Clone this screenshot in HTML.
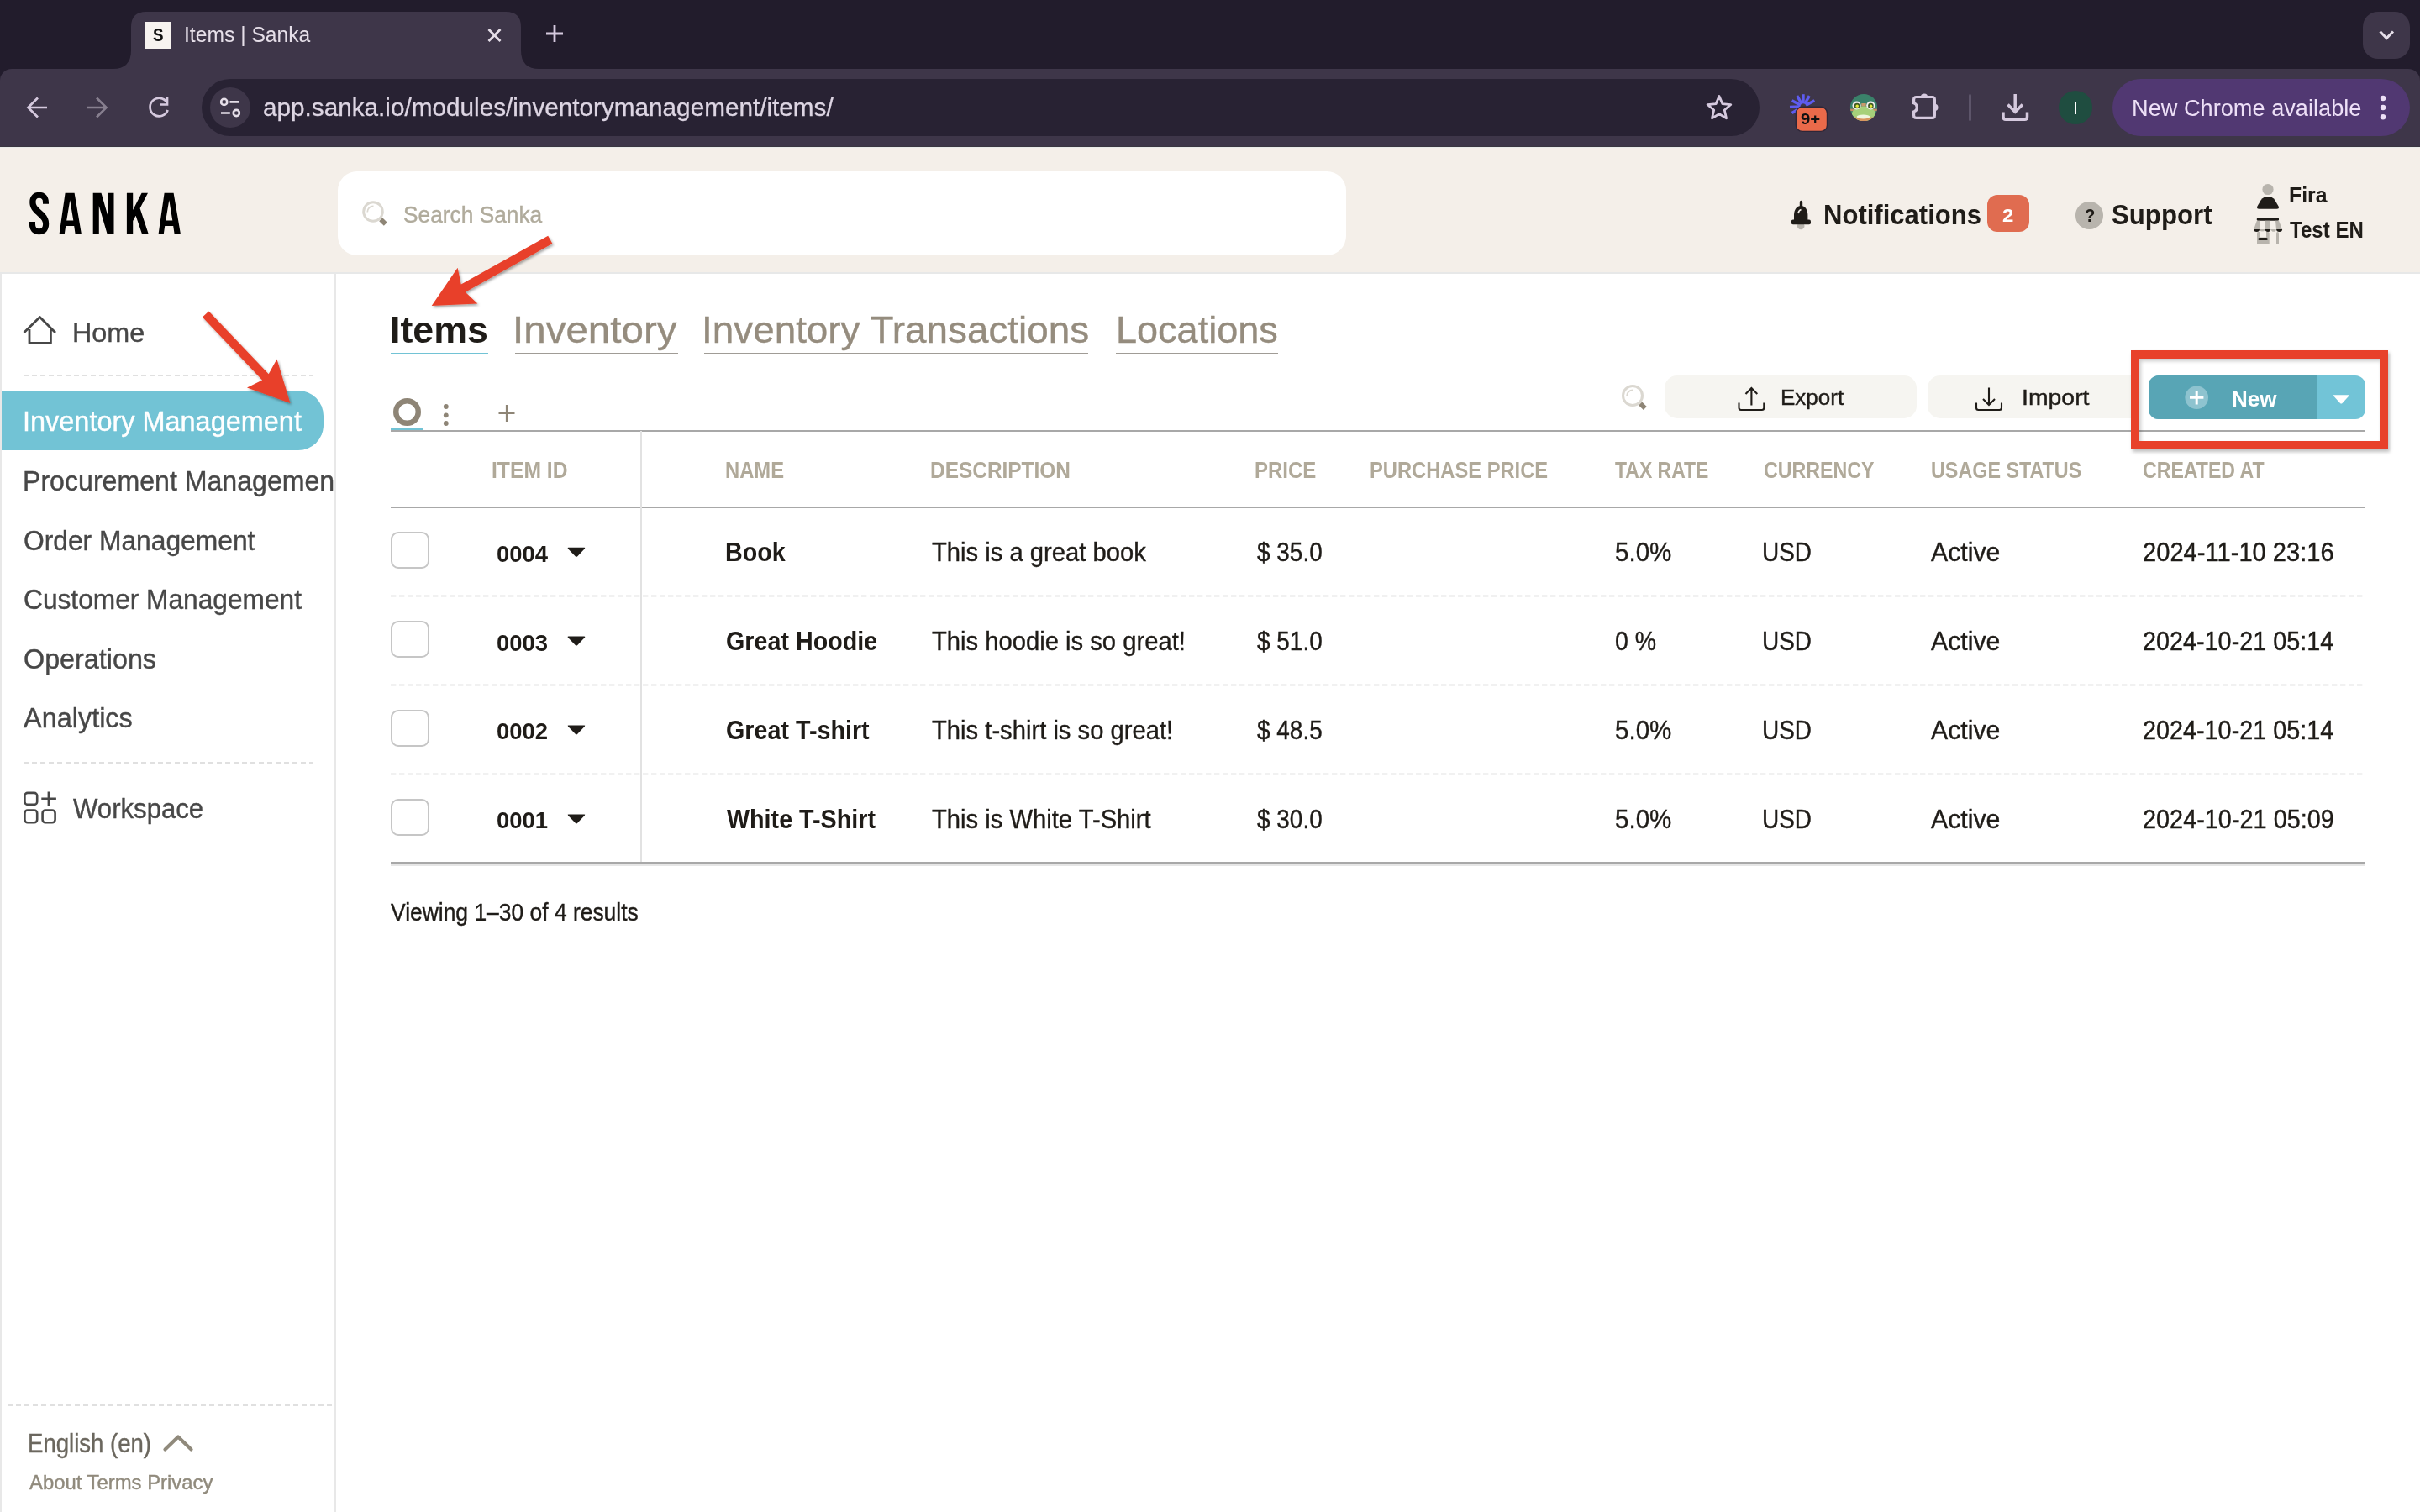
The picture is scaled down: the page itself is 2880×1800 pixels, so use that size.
<!DOCTYPE html>
<html><head><meta charset="utf-8"><title>Items | Sanka</title>
<style>
html,body{margin:0;padding:0}
body{width:2880px;height:1800px;position:relative;overflow:hidden;background:#fff;font-family:"Liberation Sans",sans-serif}
.t{position:absolute;white-space:nowrap;line-height:0;transform-origin:0 0}
svg{overflow:visible}
</style></head><body>
<div style="position:absolute;left:0px;top:0px;width:2880px;height:100px;background:#221c2c;"></div>
<svg style="position:absolute;left:0px;top:0px" width="800" height="90" viewBox="0 0 800 90"><path d="M134,82 Q156,82 156,60 L156,32 Q156,14 174,14 L602,14 Q620,14 620,32 L620,60 Q620,82 642,82 Z" fill="#3e3649"/></svg>
<div style="position:absolute;left:0px;top:82px;width:2880px;height:94px;background:#3e3649;border-radius:14px 14px 0 0"></div>
<div style="position:absolute;left:0px;top:174px;width:2880px;height:1.3px;background:#3a3640;"></div>
<div style="position:absolute;left:0px;top:175.3px;width:2880px;height:1.2px;background:#e9ebe9;"></div>
<div style="position:absolute;left:172px;top:26px;width:32px;height:32px;background:#f7f3f0;"></div>
<div class="t" style="left:181.94px;top:42.00px;font-size:21.80px;font-weight:700;color:#111;transform:scaleX(0.8638);">S</div>
<div class="t" style="left:219.08px;top:41.30px;font-size:26.16px;font-weight:400;color:#e6dfe9;transform:scaleX(0.9427);">Items | Sanka</div>
<svg style="position:absolute;left:560px;top:20px" width="130" height="40" viewBox="560 20 130 40"><path d="M581.5,35 L595.5,49 M595.5,35 L581.5,49" stroke="#e6dfe9" stroke-width="2.8" stroke-linecap="butt"/><path d="M650,40 L670,40 M660,30 L660,50" stroke="#d5c9de" stroke-width="2.8"/></svg>
<div style="position:absolute;left:2812px;top:14px;width:56px;height:56px;background:#3e3649;border-radius:18px"></div>
<svg style="position:absolute;left:2820px;top:25px" width="40" height="30" viewBox="2820 25 40 30"><path d="M2832.5,37.5 L2840.2,45.5 L2848,37.5" fill="none" stroke="#e6dfe9" stroke-width="3"/></svg>
<svg style="position:absolute;left:20px;top:105px" width="200" height="45" viewBox="20 105 200 45"><path d="M56,128 L33,128 M45,116.5 L33.5,128 L45,139.5" fill="none" stroke="#d5c9de" stroke-width="2.7"/><path d="M104,128 L127,128 M115,116.5 L126.5,128 L115,139.5" fill="none" stroke="#877f8f" stroke-width="2.7"/><path d="M198.6,122 A10.8,10.8 0 1 0 199.6,131" fill="none" stroke="#d5c9de" stroke-width="2.7"/><path d="M190.5,124.5 L199,124.5 L199,116" fill="none" stroke="#d5c9de" stroke-width="2.7"/></svg>
<div style="position:absolute;left:240px;top:94px;width:1854px;height:68px;background:#282233;border-radius:34px"></div>
<div style="position:absolute;left:250px;top:104px;width:48px;height:48px;background:#3e3649;border-radius:24px"></div>
<svg style="position:absolute;left:250px;top:104px" width="48" height="48" viewBox="250 104 48 48"><circle cx="266.7" cy="121.4" r="3.6" fill="none" stroke="#e6dfe9" stroke-width="2.6"/><path d="M273.5,121.4 L285,121.4 M263,134.5 L273.8,134.5" stroke="#e6dfe9" stroke-width="2.6"/><circle cx="281.3" cy="134.5" r="3.6" fill="none" stroke="#e6dfe9" stroke-width="2.6"/></svg>
<div class="t" style="left:313.16px;top:128.40px;font-size:29.07px;font-weight:400;color:#ddd5e3;transform:scaleX(1.0222);-webkit-text-stroke:0.3px currentColor;">app.sanka.io/modules/inventorymanagement/items/</div>
<svg style="position:absolute;left:2020px;top:105px" width="55" height="45" viewBox="2020 105 55 45"><path d="M2046.00,114.50 L2049.88,123.66 L2059.79,124.52 L2052.28,131.04 L2054.52,140.73 L2046.00,135.60 L2037.48,140.73 L2039.72,131.04 L2032.21,124.52 L2042.12,123.66 Z" fill="none" stroke="#d5c9de" stroke-width="2.8" stroke-linejoin="round"/></svg>
<svg style="position:absolute;left:2120px;top:105px" width="60" height="55" viewBox="2120 105 60 55"><g stroke="#5e5cf0" stroke-width="3.4"><path d="M2146.00,123.30 L2146.00,112.20"/><path d="M2147.75,123.77 L2153.30,114.16"/><path d="M2149.09,125.16 L2159.42,119.66"/><path d="M2144.25,123.77 L2138.70,114.16"/><path d="M2142.91,125.16 L2132.58,119.66"/><path d="M2142.50,126.92 L2130.01,127.36"/><path d="M2142.97,128.55 L2132.58,134.55"/></g><rect x="2137.3" y="127.2" width="37.2" height="29.2" rx="7.5" fill="#ea6a4a" stroke="#2e2638" stroke-width="1.4"/></svg>
<div class="t" style="left:2142.59px;top:141.50px;font-size:18.60px;font-weight:700;color:#111;transform:scaleX(1.0952);">9+</div>
<svg style="position:absolute;left:2195px;top:105px" width="50" height="50" viewBox="2195 105 50 50"><defs><clipPath id="fc"><circle cx="2218" cy="128" r="16.1"/></clipPath></defs><g clip-path="url(#fc)"><rect x="2200" y="110" width="40" height="40" fill="#3a826a"/><rect x="2200" y="129.6" width="40" height="2.6" fill="#c98a62"/><ellipse cx="2218" cy="137.5" rx="14.5" ry="11.2" fill="#a6d07a"/><rect x="2200" y="139.5" width="40" height="6" fill="#d8955f"/><ellipse cx="2217.5" cy="139" rx="7.8" ry="2.6" fill="#eef5df"/><rect x="2215.3" y="123" width="5.4" height="3.4" fill="#c99a6c"/></g><circle cx="2209.6" cy="125.5" r="5.1" fill="#f2eeee"/><circle cx="2226.3" cy="125.5" r="5.1" fill="#f2eeee"/><circle cx="2210" cy="126" r="3.3" fill="#3f5a26"/><circle cx="2226.4" cy="126" r="3.3" fill="#3f5a26"/><circle cx="2210.2" cy="126.3" r="1.7" fill="#e3ea3c"/><circle cx="2226.6" cy="126.3" r="1.7" fill="#e3ea3c"/></svg>
<svg style="position:absolute;left:2265px;top:100px" width="55" height="50" viewBox="2265 100 55 50"><path d="M2280.6,115.5 L2299.4,115.5 Q2302.4,115.5 2302.4,118.5 L2302.4,137.4 Q2302.4,140.4 2299.4,140.4 L2280.6,140.4 Q2277.6,140.4 2277.6,137.4 L2277.6,132.95 A5.3,5.3 0 0 0 2277.6,122.85 L2277.6,118.5 Q2277.6,115.5 2280.6,115.5 Z" fill="none" stroke="#d5c9de" stroke-width="3.2"/><path d="M2285.9,115.5 A4.1,4.1 0 0 1 2294.1,115.5 Z M2302.4,123.8 A4.1,4.1 0 0 1 2302.4,132 Z" fill="#d5c9de"/></svg>
<div style="position:absolute;left:2342.5px;top:112px;width:3.3px;height:32px;background:#5d556a;border-radius:2px"></div>
<svg style="position:absolute;left:2375px;top:105px" width="50" height="45" viewBox="2375 105 50 45"><path d="M2398.2,112 L2398.2,133 M2389.5,124.5 L2398.2,133.2 L2406.9,124.5" fill="none" stroke="#d5c9de" stroke-width="3.5"/><path d="M2384,133.5 L2384,139 Q2384,142.2 2387,142.2 L2409.5,142.2 Q2412.5,142.2 2412.5,139 L2412.5,133.5" fill="none" stroke="#d5c9de" stroke-width="3.5"/></svg>
<div style="position:absolute;left:2450px;top:108px;width:40px;height:40px;background:#1f4d40;border-radius:20px"></div>
<div style="position:absolute;left:2468.6px;top:120.5px;width:2.4px;height:15.3px;background:#ffffff;"></div>
<div style="position:absolute;left:2514px;top:94px;width:354px;height:68px;background:#513872;border-radius:34px"></div>
<div class="t" style="left:2537.13px;top:128.90px;font-size:27.62px;font-weight:400;color:#eddff7;transform:scaleX(0.9844);">New Chrome available</div>
<svg style="position:absolute;left:2826px;top:105px" width="20" height="45" viewBox="2826 105 20 45"><circle cx="2836" cy="117" r="3.2" fill="#eddff7"/><circle cx="2836" cy="128" r="3.2" fill="#eddff7"/><circle cx="2836" cy="139.2" r="3.2" fill="#eddff7"/></svg>
<div style="position:absolute;left:0px;top:176px;width:2880px;height:148px;background:#f4efe9;"></div>
<div style="position:absolute;left:0px;top:324px;width:2880px;height:2px;background:#e7e8e8;"></div>
<div style="position:absolute;left:0px;top:325px;width:2px;height:1475px;background:#e8e8e8;"></div>
<div style="position:absolute;left:398px;top:325px;width:2px;height:1475px;background:#e8e8e8;"></div>
<svg style="position:absolute;left:30px;top:225px" width="190" height="60" viewBox="30 225 190 60"><g fill="#000"><path d="M46.6,228.8 C53.5,228.8 58,233.6 58,241 L58,242.7 L51,242.7 L51,240.5 C51,237.3 49.5,235.8 46.6,235.8 C43.8,235.8 42.5,237.4 42.5,240.5 C42.5,243.8 44.3,246 48.2,249.5 C54.8,255.2 58.2,259.2 58.2,266.5 C58.2,274.5 53.7,279.3 46.5,279.3 C39.3,279.3 34.9,274.5 34.9,266.8 L34.9,264 L42,264 L42,267 C42,270.5 43.6,272.3 46.6,272.3 C49.6,272.3 51.1,270.5 51.1,267 C51.1,263.5 49.6,261.2 45,257.2 C38.9,251.8 35.3,247.6 35.3,240.8 C35.3,233.4 39.8,228.8 46.6,228.8 Z"/><path d="M77.6,229.8 L88.6,229.8 L96.9,278.4 L89.6,278.4 L88.2,269 L78.2,269 L76.8,278.4 L70.6,278.4 Z M83.3,238.2 L79.2,262.6 L87.3,262.6 Z"/><path d="M110.7,229.8 L120.5,229.8 L128.8,258.5 L128.8,229.8 L135.5,229.8 L135.5,278.4 L127.6,278.4 L117.8,245 L117.8,278.4 L110.7,278.4 Z"/><path d="M150.9,229.8 L158.2,229.8 L158.2,250 L168.6,229.8 L176,229.8 L166.6,248 L176.7,278.4 L169,278.4 L161.6,256.8 L158.2,263 L158.2,278.4 L150.9,278.4 Z"/><path d="M195.6,229.8 L206.6,229.8 L214.9,278.4 L207.6,278.4 L206.2,269 L196.2,269 L194.8,278.4 L188.6,278.4 Z M201.3,238.2 L197.2,262.6 L205.3,262.6 Z"/></g></svg>
<div style="position:absolute;left:402px;top:204px;width:1200px;height:100px;background:#ffffff;border-radius:23px"></div>
<svg style="position:absolute;left:425px;top:235px" width="40" height="40" viewBox="425 235 40 40"><circle cx="444" cy="252" r="11.3" fill="none" stroke="#dbd8d1" stroke-width="3"/><path d="M437.2,252.5 A7.2,7.2 0 0 1 444.5,245.3" fill="none" stroke="#dbd8d1" stroke-width="1.8"/><path d="M453.2,261.2 L458.8,266.8" stroke="#8e8576" stroke-width="5.6"/></svg>
<div class="t" style="left:480.22px;top:256.40px;font-size:27.62px;font-weight:400;color:#b0ab9c;transform:scaleX(0.9525);-webkit-text-stroke:0.4px currentColor;">Search Sanka</div>
<svg style="position:absolute;left:2125px;top:235px" width="40" height="45" viewBox="2125 235 40 45"><path d="M2143.5,240.5 L2143.5,245.5" stroke="#1f1c18" stroke-width="3.4" stroke-linecap="round"/><circle cx="2143.2" cy="269" r="4.3" fill="#b8b4ad"/><path d="M2135,266.8 L2135,256 C2135,249.5 2138.5,245 2143.3,245 C2148,245 2151.4,249.5 2151.4,256 L2151.4,266.8 Z" fill="#1f1c18"/><rect x="2131.8" y="261.5" width="23.2" height="5.8" rx="2" fill="#1f1c18"/><path d="M2140,254 Q2140.5,250.5 2143.5,249.5" stroke="#f4efe9" stroke-width="1.8" fill="none"/></svg>
<div class="t" style="left:2169.98px;top:256.10px;font-size:32.41px;font-weight:700;color:#1f1c18;transform:scaleX(0.9582);">Notifications</div>
<div style="position:absolute;left:2365px;top:232px;width:50px;height:44px;background:#e06c50;border-radius:12px"></div>
<div class="t" style="left:2383.16px;top:256.00px;font-size:22.82px;font-weight:700;color:#ffffff;transform:scaleX(1.0499);">2</div>
<div style="position:absolute;left:2470.2px;top:240.2px;width:32.5px;height:32.5px;background:#b8b4ad;border-radius:50%"></div>
<div class="t" style="left:2480.79px;top:257.10px;font-size:21.80px;font-weight:700;color:#1f1c18;transform:scaleX(0.9263);">?</div>
<div class="t" style="left:2513.26px;top:255.80px;font-size:33.58px;font-weight:700;color:#1f1c18;transform:scaleX(0.9289);">Support</div>
<svg style="position:absolute;left:2675px;top:215px" width="50" height="80" viewBox="2675 215 50 80"><circle cx="2699" cy="225.5" r="6.6" fill="#b8b4ad"/><path d="M2686.6,245.2 L2690.8,238 Q2693.8,234 2699,234 Q2704.2,234 2707.2,238 L2711.4,245.2 Q2713.2,248.7 2709.4,248.7 L2688.6,248.7 Q2684.8,248.7 2686.6,245.2 Z" fill="#1f1c18"/><rect x="2685.8" y="259" width="26.2" height="3.8" rx="1.5" fill="#1f1c18"/><path d="M2685.8,262.8 L2690,262.8 L2689,272.9 L2682.2,272.9 Z M2696,262.8 L2702,262.8 L2702,272.9 L2696,272.9 Z M2708,262.8 L2712,262.8 L2716,272.9 L2709,272.9 Z" fill="#b8b4ad"/><path d="M2682.20,272.9 A3.4,3 0 0 0 2689.00,272.9 Z" fill="#1f1c18"/><path d="M2695.70,272.9 A3.3,3 0 0 0 2702.30,272.9 Z" fill="#1f1c18"/><path d="M2709.10,272.9 A3.5,3 0 0 0 2716.10,272.9 Z" fill="#1f1c18"/><path d="M2689.40,272.9 A2.9,2.8 0 0 0 2695.20,272.9 Z" fill="#b8b4ad"/><path d="M2702.80,272.9 A3,2.8 0 0 0 2708.80,272.9 Z" fill="#b8b4ad"/><rect x="2686" y="275.9" width="14.7" height="14.9" rx="1.5" fill="#b8b4ad"/><rect x="2689" y="275.5" width="8" height="7" fill="#f4efe9"/><rect x="2687.4" y="282.9" width="11.4" height="3" rx="1.5" fill="#1f1c18"/><rect x="2709" y="275.9" width="3" height="14.9" rx="1.5" fill="#b8b4ad"/></svg>
<div class="t" style="left:2723.79px;top:232.40px;font-size:26.31px;font-weight:700;color:#1f1c18;transform:scaleX(0.9422);">Fira</div>
<div class="t" style="left:2725.16px;top:274.00px;font-size:26.74px;font-weight:700;color:#1f1c18;transform:scaleX(0.9007);">Test EN</div>
<svg style="position:absolute;left:20px;top:370px" width="55" height="45" viewBox="20 370 55 45"><path d="M28.5,396 L47.4,377.5 L66,396 M35,392 L35,408.5 L60.4,408.5 L60.4,392" fill="none" stroke="#474747" stroke-width="2.8" stroke-linejoin="round"/></svg>
<div class="t" style="left:86.01px;top:396.00px;font-size:31.98px;font-weight:400;color:#474747;transform:scaleX(1.0113);-webkit-text-stroke:0.4px currentColor;">Home</div>
<svg style="position:absolute;left:0px;top:440px" width="400" height="1240" viewBox="0 440 400 1240"><line x1="28" y1="447" x2="372" y2="447" stroke="#e0e0e0" stroke-width="2" stroke-dasharray="6 4"/><line x1="28" y1="908" x2="372" y2="908" stroke="#e0e0e0" stroke-width="2" stroke-dasharray="6 4"/><line x1="9" y1="1673" x2="396" y2="1673" stroke="#e0e0e0" stroke-width="2" stroke-dasharray="6 4"/></svg>
<div style="position:absolute;left:2px;top:465px;width:383px;height:71px;background:#72c3d5;border-radius:0 30px 30px 0"></div>
<div class="t" style="left:27.28px;top:501.90px;font-size:32.99px;font-weight:400;color:#ffffff;transform:scaleX(0.9838);-webkit-text-stroke:0.4px currentColor;">Inventory Management</div>
<div style="position:absolute;left:0;top:540px;width:397px;height:80px;overflow:hidden">
<div class="t" style="left:27.23px;top:33.00px;font-size:32.41px;font-weight:400;color:#474747;transform:scaleX(0.9908);-webkit-text-stroke:0.4px currentColor;">Procurement Management</div>
</div>
<div class="t" style="left:28.37px;top:644.00px;font-size:32.41px;font-weight:400;color:#474747;transform:scaleX(0.9800);-webkit-text-stroke:0.4px currentColor;">Order Management</div>
<div class="t" style="left:28.22px;top:714.20px;font-size:32.41px;font-weight:400;color:#474747;transform:scaleX(0.9775);-webkit-text-stroke:0.4px currentColor;">Customer Management</div>
<div class="t" style="left:28.35px;top:785.00px;font-size:32.41px;font-weight:400;color:#474747;transform:scaleX(0.9968);-webkit-text-stroke:0.4px currentColor;">Operations</div>
<div class="t" style="left:28.44px;top:855.20px;font-size:32.41px;font-weight:400;color:#474747;transform:scaleX(1.0011);-webkit-text-stroke:0.4px currentColor;">Analytics</div>
<svg style="position:absolute;left:20px;top:935px" width="55" height="55" viewBox="20 935 55 55"><g fill="none" stroke="#474747" stroke-width="2.6"><rect x="29.4" y="943.9" width="14.8" height="14" rx="3.5"/><rect x="29.4" y="964.5" width="14.8" height="14.8" rx="3.5"/><rect x="50.6" y="964.5" width="15" height="14.8" rx="3.5"/><path d="M49.3,950.8 L66.9,950.8 M57.9,942.6 L57.9,959.4"/></g></svg>
<div class="t" style="left:87.44px;top:963.30px;font-size:32.41px;font-weight:400;color:#474747;transform:scaleX(0.9609);-webkit-text-stroke:0.4px currentColor;">Workspace</div>
<div class="t" style="left:33.39px;top:1718.40px;font-size:30.52px;font-weight:400;color:#6b675e;transform:scaleX(0.9031);-webkit-text-stroke:0.4px currentColor;">English (en)</div>
<svg style="position:absolute;left:185px;top:1700px" width="55" height="35" viewBox="185 1700 55 35"><path d="M196.5,1725.5 L212,1710.5 L227.5,1725.5" fill="none" stroke="#908a7c" stroke-width="4.2" stroke-linecap="round" stroke-linejoin="round"/></svg>
<div class="t" style="left:34.58px;top:1764.80px;font-size:24.27px;font-weight:400;color:#908a7c;transform:scaleX(0.9835);-webkit-text-stroke:0.4px currentColor;">About Terms Privacy</div>
<div class="t" style="left:463.89px;top:391.70px;font-size:44.77px;font-weight:700;color:#1f1c18;transform:scaleX(0.9987);">Items</div>
<div style="position:absolute;left:465px;top:419.5px;width:116px;height:2px;background:#72c3d5;"></div>
<div class="t" style="left:610.22px;top:391.90px;font-size:44.77px;font-weight:400;color:#958c7e;transform:scaleX(1.0619);-webkit-text-stroke:0.4px currentColor;">Inventory</div>
<div style="position:absolute;left:613px;top:419.5px;width:194px;height:1.6px;background:#a09c96;"></div>
<div class="t" style="left:834.87px;top:391.90px;font-size:44.77px;font-weight:400;color:#958c7e;transform:scaleX(1.0239);-webkit-text-stroke:0.4px currentColor;">Inventory Transactions</div>
<div style="position:absolute;left:838px;top:419.5px;width:457px;height:1.6px;background:#a09c96;"></div>
<div class="t" style="left:1328.30px;top:391.90px;font-size:44.77px;font-weight:400;color:#958c7e;transform:scaleX(1.0061);-webkit-text-stroke:0.4px currentColor;">Locations</div>
<div style="position:absolute;left:1328px;top:419.5px;width:193px;height:1.6px;background:#a09c96;"></div>
<svg style="position:absolute;left:460px;top:470px" width="160" height="40" viewBox="460 470 160 40"><circle cx="484.5" cy="490.5" r="13.3" fill="none" stroke="#8e8576" stroke-width="6.4"/><circle cx="530.8" cy="484" r="2.9" fill="#8e8576"/><circle cx="530.8" cy="494.3" r="2.9" fill="#8e8576"/><circle cx="530.8" cy="504" r="2.9" fill="#8e8576"/><path d="M593.5,492 L612.5,492 M603,482 L603,502" stroke="#8e8576" stroke-width="2.2"/></svg>
<div style="position:absolute;left:465px;top:510px;width:39px;height:3.5px;background:#72c3d5;"></div>
<div style="position:absolute;left:465px;top:512px;width:2350px;height:2px;background:#a8a8a8;"></div>
<svg style="position:absolute;left:1925px;top:455px" width="40" height="40" viewBox="1925 455 40 40"><circle cx="1943" cy="471" r="11.5" fill="none" stroke="#dbd8d1" stroke-width="3"/><path d="M1936,471.5 A7.2,7.2 0 0 1 1943.3,464.3" fill="none" stroke="#dbd8d1" stroke-width="1.8"/><path d="M1952.2,480.4 L1957.8,486" stroke="#8e8576" stroke-width="5.6"/></svg>
<div style="position:absolute;left:1981px;top:447px;width:300px;height:51px;background:#f6f5f1;border-radius:15px"></div>
<svg style="position:absolute;left:2060px;top:455px" width="50" height="40" viewBox="2060 455 50 40"><path d="M2084.4,482.6 L2084.4,462 M2077.5,469 L2084.4,462 L2091.3,469" fill="none" stroke="#1f1c18" stroke-width="2.1"/><path d="M2069.5,479.5 L2069.5,485.5 Q2069.5,488 2072,488 L2096.8,488 Q2099.3,488 2099.3,485.5 L2099.3,479.5" fill="none" stroke="#1f1c18" stroke-width="2.1"/></svg>
<div class="t" style="left:2118.62px;top:472.80px;font-size:25.58px;font-weight:400;color:#1f1c18;transform:scaleX(1.0159);-webkit-text-stroke:0.4px currentColor;">Export</div>
<div style="position:absolute;left:2294px;top:447px;width:300px;height:51px;background:#f6f5f1;border-radius:15px"></div>
<svg style="position:absolute;left:2340px;top:455px" width="50" height="40" viewBox="2340 455 50 40"><path d="M2367,461.5 L2367,482 M2360,475 L2367,482 L2374,475" fill="none" stroke="#1f1c18" stroke-width="2.1"/><path d="M2352,479.5 L2352,485.5 Q2352,488 2354.5,488 L2379.5,488 Q2382,488 2382,485.5 L2382,479.5" fill="none" stroke="#1f1c18" stroke-width="2.1"/></svg>
<div class="t" style="left:2406.44px;top:472.80px;font-size:25.58px;font-weight:400;color:#1f1c18;transform:scaleX(1.1106);-webkit-text-stroke:0.4px currentColor;">Import</div>
<div style="position:absolute;left:2545px;top:425px;width:290px;height:102px;background:#ffffff;"></div>
<div style="position:absolute;left:2546px;top:512px;width:269px;height:2px;background:#a8a8a8;"></div>
<div style="position:absolute;left:2557px;top:447px;width:258px;height:52px;background:#72c4d7;border-radius:12px"></div>
<div style="position:absolute;left:2557px;top:447px;width:200px;height:52px;background:#58a5b5;border-radius:12px 0 0 12px"></div>
<svg style="position:absolute;left:2595px;top:455px" width="210" height="35" viewBox="2595 455 210 35"><circle cx="2614.2" cy="473.2" r="13.8" fill="#8ec3cf"/><path d="M2606,473.2 L2622.4,473.2 M2614.2,465 L2614.2,481.4" stroke="#fff" stroke-width="3"/><path d="M2777.5,470.2 L2795,470.2 Q2796.5,470.2 2795.5,471.3 L2787.5,480 Q2786.3,481.2 2785,480 L2777,471.3 Q2776,470.2 2777.5,470.2 Z" fill="#fff"/></svg>
<div class="t" style="left:2655.71px;top:474.70px;font-size:25.00px;font-weight:700;color:#ffffff;transform:scaleX(1.0406);">New</div>
<div style="position:absolute;left:2536px;top:417px;width:286px;height:98px;border:10px solid #e8412a;box-shadow:2px 3px 4px rgba(0,0,0,0.25), inset 2px 3px 4px rgba(0,0,0,0.2)"></div>
<div class="t" style="left:585.40px;top:559.90px;font-size:26.89px;font-weight:700;color:#b0a999;transform:scaleX(0.9182);">ITEM ID</div>
<div class="t" style="left:862.85px;top:559.90px;font-size:26.89px;font-weight:700;color:#b0a999;transform:scaleX(0.8852);">NAME</div>
<div class="t" style="left:1107.01px;top:559.90px;font-size:26.89px;font-weight:700;color:#b0a999;transform:scaleX(0.9092);">DESCRIPTION</div>
<div class="t" style="left:1493.34px;top:559.90px;font-size:26.89px;font-weight:700;color:#b0a999;transform:scaleX(0.8925);">PRICE</div>
<div class="t" style="left:1630.46px;top:559.90px;font-size:26.89px;font-weight:700;color:#b0a999;transform:scaleX(0.8822);">PURCHASE PRICE</div>
<div class="t" style="left:1921.77px;top:559.90px;font-size:26.89px;font-weight:700;color:#b0a999;transform:scaleX(0.8545);">TAX RATE</div>
<div class="t" style="left:2098.77px;top:559.90px;font-size:26.89px;font-weight:700;color:#b0a999;transform:scaleX(0.8638);">CURRENCY</div>
<div class="t" style="left:2297.60px;top:559.90px;font-size:26.89px;font-weight:700;color:#b0a999;transform:scaleX(0.8678);">USAGE STATUS</div>
<div class="t" style="left:2550.08px;top:559.90px;font-size:26.89px;font-weight:700;color:#b0a999;transform:scaleX(0.8600);">CREATED AT</div>
<div style="position:absolute;left:465px;top:602.5px;width:2350px;height:2px;background:#a8a8a8;"></div>
<div style="position:absolute;left:761.8px;top:513px;width:2px;height:515px;background:#e2e2e2;"></div>
<div style="position:absolute;left:465.3px;top:633.4px;width:45.5px;height:44px;background:#ffffff;box-sizing:border-box;border:2px solid #c6c6c6;border-radius:9px"></div>
<div class="t" style="left:591.30px;top:659.70px;font-size:27.91px;font-weight:700;color:#1f1c18;transform:scaleX(0.9846);">0004</div>
<svg style="position:absolute;left:670px;top:648px" width="30" height="20" viewBox="670 648 30 20"><path d="M676.5,651.8 L695.3,651.8 Q697,651.8 695.8,653.2 L687.3,662.2 Q686,663.4 684.7,662.2 L676,653.2 Q675,651.8 676.5,651.8 Z" fill="#1f1c18"/></svg>
<div class="t" style="left:862.93px;top:657.90px;font-size:31.40px;font-weight:700;color:#1f1c18;transform:scaleX(0.9142);">Book</div>
<div class="t" style="left:1108.57px;top:657.40px;font-size:31.54px;font-weight:400;color:#1f1c18;transform:scaleX(0.9260);-webkit-text-stroke:0.4px currentColor;">This is a great book</div>
<div class="t" style="left:1495.82px;top:657.40px;font-size:31.54px;font-weight:400;color:#1f1c18;transform:scaleX(0.8861);-webkit-text-stroke:0.4px currentColor;">$ 35.0</div>
<div class="t" style="left:1921.82px;top:657.40px;font-size:31.54px;font-weight:400;color:#1f1c18;transform:scaleX(0.9375);-webkit-text-stroke:0.4px currentColor;">5.0%</div>
<div class="t" style="left:2097.20px;top:657.40px;font-size:31.54px;font-weight:400;color:#1f1c18;transform:scaleX(0.8874);-webkit-text-stroke:0.4px currentColor;">USD</div>
<div class="t" style="left:2297.85px;top:657.40px;font-size:31.54px;font-weight:400;color:#1f1c18;transform:scaleX(0.9600);-webkit-text-stroke:0.4px currentColor;">Active</div>
<div class="t" style="left:2549.54px;top:657.40px;font-size:31.54px;font-weight:400;color:#1f1c18;transform:scaleX(0.9234);-webkit-text-stroke:0.4px currentColor;">2024-11-10 23:16</div>
<svg style="position:absolute;left:460px;top:700px" width="2360" height="20" viewBox="460 700 2360 20"><line x1="465" y1="709.5" x2="2815" y2="709.5" stroke="#e4e4e4" stroke-width="2" stroke-dasharray="6.4 3.6"/></svg>
<div style="position:absolute;left:465.3px;top:739.2px;width:45.5px;height:44px;background:#ffffff;box-sizing:border-box;border:2px solid #c6c6c6;border-radius:9px"></div>
<div class="t" style="left:591.30px;top:765.50px;font-size:27.91px;font-weight:700;color:#1f1c18;transform:scaleX(0.9846);">0003</div>
<svg style="position:absolute;left:670px;top:754px" width="30" height="20" viewBox="670 754 30 20"><path d="M676.5,757.6 L695.3,757.6 Q697,757.6 695.8,759.0 L687.3,768.0 Q686,769.2 684.7,768.0 L676,759.0 Q675,757.6 676.5,757.6 Z" fill="#1f1c18"/></svg>
<div class="t" style="left:863.65px;top:763.70px;font-size:31.40px;font-weight:700;color:#1f1c18;transform:scaleX(0.9142);">Great Hoodie</div>
<div class="t" style="left:1108.57px;top:763.20px;font-size:31.54px;font-weight:400;color:#1f1c18;transform:scaleX(0.9260);-webkit-text-stroke:0.4px currentColor;">This hoodie is so great!</div>
<div class="t" style="left:1495.82px;top:763.20px;font-size:31.54px;font-weight:400;color:#1f1c18;transform:scaleX(0.8861);-webkit-text-stroke:0.4px currentColor;">$ 51.0</div>
<div class="t" style="left:1921.86px;top:763.20px;font-size:31.54px;font-weight:400;color:#1f1c18;transform:scaleX(0.9039);-webkit-text-stroke:0.4px currentColor;">0 %</div>
<div class="t" style="left:2097.20px;top:763.20px;font-size:31.54px;font-weight:400;color:#1f1c18;transform:scaleX(0.8874);-webkit-text-stroke:0.4px currentColor;">USD</div>
<div class="t" style="left:2297.85px;top:763.20px;font-size:31.54px;font-weight:400;color:#1f1c18;transform:scaleX(0.9600);-webkit-text-stroke:0.4px currentColor;">Active</div>
<div class="t" style="left:2549.56px;top:763.20px;font-size:31.54px;font-weight:400;color:#1f1c18;transform:scaleX(0.9128);-webkit-text-stroke:0.4px currentColor;">2024-10-21 05:14</div>
<svg style="position:absolute;left:460px;top:806px" width="2360" height="20" viewBox="460 806 2360 20"><line x1="465" y1="815.5" x2="2815" y2="815.5" stroke="#e4e4e4" stroke-width="2" stroke-dasharray="6.4 3.6"/></svg>
<div style="position:absolute;left:465.3px;top:845.0px;width:45.5px;height:44px;background:#ffffff;box-sizing:border-box;border:2px solid #c6c6c6;border-radius:9px"></div>
<div class="t" style="left:591.30px;top:871.30px;font-size:27.91px;font-weight:700;color:#1f1c18;transform:scaleX(0.9846);">0002</div>
<svg style="position:absolute;left:670px;top:860px" width="30" height="20" viewBox="670 860 30 20"><path d="M676.5,863.4 L695.3,863.4 Q697,863.4 695.8,864.8 L687.3,873.8 Q686,875.0 684.7,873.8 L676,864.8 Q675,863.4 676.5,863.4 Z" fill="#1f1c18"/></svg>
<div class="t" style="left:863.65px;top:869.50px;font-size:31.40px;font-weight:700;color:#1f1c18;transform:scaleX(0.9142);">Great T-shirt</div>
<div class="t" style="left:1108.57px;top:869.00px;font-size:31.54px;font-weight:400;color:#1f1c18;transform:scaleX(0.9260);-webkit-text-stroke:0.4px currentColor;">This t-shirt is so great!</div>
<div class="t" style="left:1495.82px;top:869.00px;font-size:31.54px;font-weight:400;color:#1f1c18;transform:scaleX(0.8861);-webkit-text-stroke:0.4px currentColor;">$ 48.5</div>
<div class="t" style="left:1921.82px;top:869.00px;font-size:31.54px;font-weight:400;color:#1f1c18;transform:scaleX(0.9375);-webkit-text-stroke:0.4px currentColor;">5.0%</div>
<div class="t" style="left:2097.20px;top:869.00px;font-size:31.54px;font-weight:400;color:#1f1c18;transform:scaleX(0.8874);-webkit-text-stroke:0.4px currentColor;">USD</div>
<div class="t" style="left:2297.85px;top:869.00px;font-size:31.54px;font-weight:400;color:#1f1c18;transform:scaleX(0.9600);-webkit-text-stroke:0.4px currentColor;">Active</div>
<div class="t" style="left:2549.56px;top:869.00px;font-size:31.54px;font-weight:400;color:#1f1c18;transform:scaleX(0.9128);-webkit-text-stroke:0.4px currentColor;">2024-10-21 05:14</div>
<svg style="position:absolute;left:460px;top:912px" width="2360" height="20" viewBox="460 912 2360 20"><line x1="465" y1="921.5" x2="2815" y2="921.5" stroke="#e4e4e4" stroke-width="2" stroke-dasharray="6.4 3.6"/></svg>
<div style="position:absolute;left:465.3px;top:951.0px;width:45.5px;height:44px;background:#ffffff;box-sizing:border-box;border:2px solid #c6c6c6;border-radius:9px"></div>
<div class="t" style="left:591.30px;top:977.30px;font-size:27.91px;font-weight:700;color:#1f1c18;transform:scaleX(0.9846);">0001</div>
<svg style="position:absolute;left:670px;top:966px" width="30" height="20" viewBox="670 966 30 20"><path d="M676.5,969.4 L695.3,969.4 Q697,969.4 695.8,970.8 L687.3,979.8 Q686,981.0 684.7,979.8 L676,970.8 Q675,969.4 676.5,969.4 Z" fill="#1f1c18"/></svg>
<div class="t" style="left:864.80px;top:975.50px;font-size:31.40px;font-weight:700;color:#1f1c18;transform:scaleX(0.9142);">White T-Shirt</div>
<div class="t" style="left:1108.57px;top:975.00px;font-size:31.54px;font-weight:400;color:#1f1c18;transform:scaleX(0.9260);-webkit-text-stroke:0.4px currentColor;">This is White T-Shirt</div>
<div class="t" style="left:1495.82px;top:975.00px;font-size:31.54px;font-weight:400;color:#1f1c18;transform:scaleX(0.8861);-webkit-text-stroke:0.4px currentColor;">$ 30.0</div>
<div class="t" style="left:1921.82px;top:975.00px;font-size:31.54px;font-weight:400;color:#1f1c18;transform:scaleX(0.9375);-webkit-text-stroke:0.4px currentColor;">5.0%</div>
<div class="t" style="left:2097.20px;top:975.00px;font-size:31.54px;font-weight:400;color:#1f1c18;transform:scaleX(0.8874);-webkit-text-stroke:0.4px currentColor;">USD</div>
<div class="t" style="left:2297.85px;top:975.00px;font-size:31.54px;font-weight:400;color:#1f1c18;transform:scaleX(0.9600);-webkit-text-stroke:0.4px currentColor;">Active</div>
<div class="t" style="left:2549.56px;top:975.00px;font-size:31.54px;font-weight:400;color:#1f1c18;transform:scaleX(0.9152);-webkit-text-stroke:0.4px currentColor;">2024-10-21 05:09</div>
<div style="position:absolute;left:465px;top:1026.3px;width:2350px;height:2.2px;background:#a8a8a8;"></div>
<div style="position:absolute;left:465px;top:1028.5px;width:2350px;height:2px;background:#e6e6e6;"></div>
<div class="t" style="left:465.37px;top:1085.50px;font-size:28.78px;font-weight:400;color:#1f1c18;transform:scaleX(0.9185);-webkit-text-stroke:0.4px currentColor;">Viewing 1–30 of 4 results</div>
<svg style="position:absolute;left:200px;top:260px" width="500" height="240" viewBox="200 260 500 240"><defs><filter id="sh" x="-20%" y="-20%" width="140%" height="140%"><feDropShadow dx="1.5" dy="2" stdDeviation="1.5" flood-color="#000" flood-opacity="0.35"/></filter></defs><g filter="url(#sh)" fill="#e8412a"><path d="M240.9,377.6 L312.1,452.5 L294.0,461.4 L345.5,480.0 L329.5,427.6 L319.7,445.2 L248.5,370.4 Z"/><path d="M652.2,280.8 L548.7,338.6 L544.6,318.8 L513.7,364.1 L568.4,361.6 L553.8,347.7 L657.4,290.0 Z"/></g></svg>
</body></html>
